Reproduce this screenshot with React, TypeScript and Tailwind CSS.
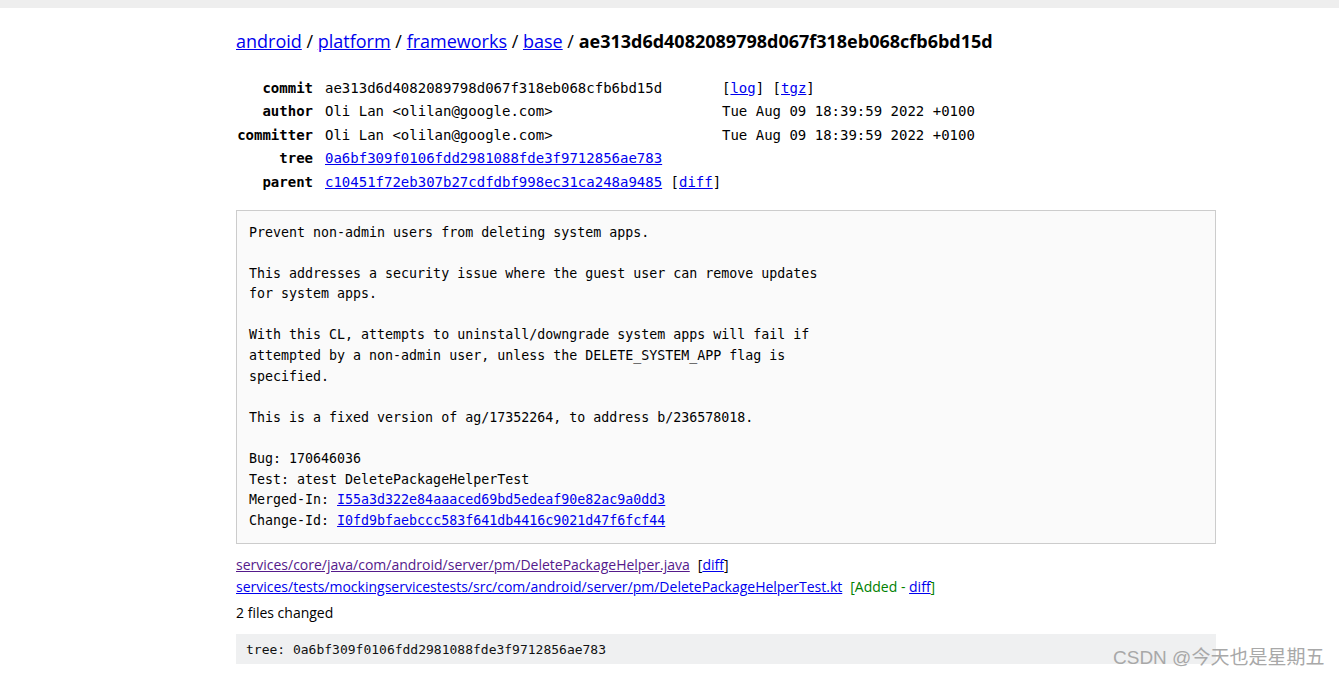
import React from 'react';

const mono = "font-['DejaVu_Sans_Mono',monospace]";
const sans = "font-['Open_Sans',Arial,sans-serif]";

const crumbs = ['android', 'platform', 'frameworks', 'base'];

const message = [
  'Prevent non-admin users from deleting system apps.',
  '',
  'This addresses a security issue where the guest user can remove updates',
  'for system apps.',
  '',
  'With this CL, attempts to uninstall/downgrade system apps will fail if',
  'attempted by a non-admin user, unless the DELETE_SYSTEM_APP flag is',
  'specified.',
  '',
  'This is a fixed version of ag/17352264, to address b/236578018.',
  '',
  'Bug: 170646036',
  'Test: atest DeletePackageHelperTest',
];

const Link: React.FC<{ children: React.ReactNode; visited?: boolean }> = ({ children, visited }) => (
  <a href="#" className={`underline ${visited ? 'text-[#551a8b]' : 'text-[#0000ee]'}`}>
    {children}
  </a>
);

export default function App() {
  return (
    <div className={`min-h-[677px] bg-white text-black ${sans}`}>
      <div className="h-[8px] bg-[#eeeeee]" />

      <div className="ml-[236px] w-[980px]">
        {/* breadcrumb */}
        <h1 className="mt-[21px] text-[18px] leading-[24px]">
          {crumbs.map((c) => (
            <span key={c}>
              <Link>{c}</Link> /{' '}
            </span>
          ))}
          <span className="font-bold">ae313d6d4082089798d067f318eb068cfb6bd15d</span>
        </h1>

        {/* metadata */}
        <div
          className={`mt-[23.5px] grid grid-cols-[77px_385px_auto] gap-x-[12px] text-[14px] leading-[23.5px] ${mono}`}
        >
          <div className="text-right font-bold">commit</div>
          <div>ae313d6d4082089798d067f318eb068cfb6bd15d</div>
          <div>
            [<Link>log</Link>] [<Link>tgz</Link>]
          </div>

          <div className="text-right font-bold">author</div>
          <div>Oli Lan &lt;olilan@google.com&gt;</div>
          <div>Tue Aug 09 18:39:59 2022 +0100</div>

          <div className="text-right font-bold -ml-[4px]">committer</div>
          <div>Oli Lan &lt;olilan@google.com&gt;</div>
          <div>Tue Aug 09 18:39:59 2022 +0100</div>

          <div className="text-right font-bold">tree</div>
          <div className="col-span-2">
            <Link>0a6bf309f0106fdd2981088fde3f9712856ae783</Link>
          </div>

          <div className="text-right font-bold">parent</div>
          <div className="col-span-2">
            <Link>c10451f72eb307b27cdfdbf998ec31ca248a9485</Link> [<Link>diff</Link>]
          </div>
        </div>

        {/* commit message */}
        <pre
          className={`mt-[15.5px] border border-[#cccccc] bg-[#fafafa] px-[12px] pt-[12px] pb-[12px] text-[13.3px] leading-[20.6px] whitespace-pre ${mono}`}
        >
          {message.join('\n')}
          {'\n'}Merged-In: <Link>I55a3d322e84aaaced69bd5edeaf90e82ac9a0dd3</Link>
          {'\n'}Change-Id: <Link>I0fd9bfaebccc583f641db4416c9021d47f6fcf44</Link>
        </pre>

        {/* changed files */}
        <ul className="mt-[10px] text-[14px] leading-[22px]">
          <li>
            <Link visited>services/core/java/com/android/server/pm/DeletePackageHelper.java</Link>
            <span className="ml-[8px]">
              [<Link>diff</Link>]
            </span>
          </li>
          <li>
            <Link>services/tests/mockingservicestests/src/com/android/server/pm/DeletePackageHelperTest.kt</Link>
            <span className="ml-[8px] text-[#008000]">
              [Added - <Link>diff</Link>]
            </span>
          </li>
        </ul>
        <div className="mt-[4px] text-[14px] leading-[22px]">2 files changed</div>

        <div
          className={`mt-[10px] flex h-[30px] items-center bg-[#eff0f1] px-[10px] text-[13px] text-[#111] ${mono}`}
        >
          tree: 0a6bf309f0106fdd2981088fde3f9712856ae783
        </div>
      </div>

      <div
        className="pointer-events-none absolute left-[1113px] top-[645px] text-[19px] leading-[26px] text-[#a8a8a8] font-['Liberation_Sans','Noto_Sans_CJK_SC',sans-serif]"
      >
        CSDN @今天也是星期五
      </div>
    </div>
  );
}
